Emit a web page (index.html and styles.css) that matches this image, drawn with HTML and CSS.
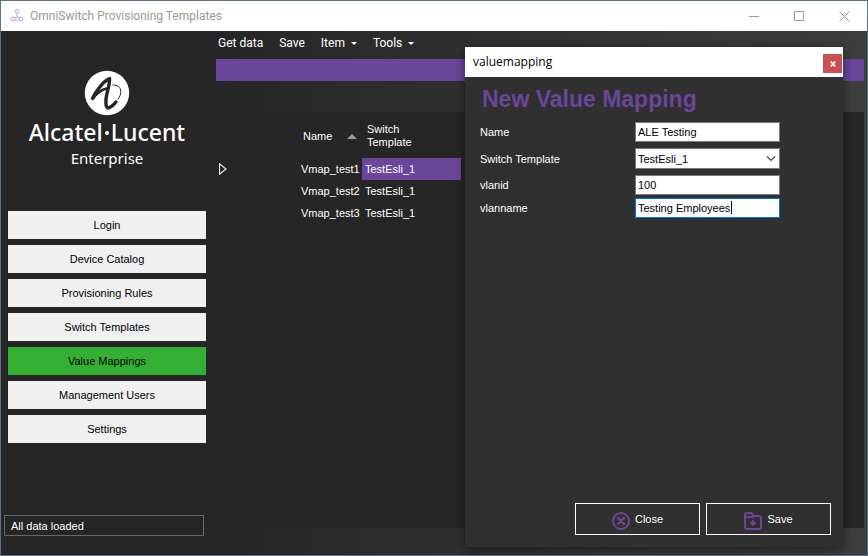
FILE: index.html
```html
<!DOCTYPE html>
<html lang="en">
<head>
<meta charset="utf-8">
<title>OmniSwitch Provisioning Templates</title>
<link rel="stylesheet" href="styles.css">
</head>
<body>
<div class="window">
  <header class="titlebar">
    <svg class="app-icon" width="14" height="14" viewBox="0 0 14 14" fill="none" stroke="#b9a5d6" aria-hidden="true">
      <circle cx="7" cy="2.500" r="1.800"/><circle cx="3" cy="10" r="1.800"/><circle cx="11" cy="10" r="1.800"/>
      <path d="M7 4.500v3.500M7 8l-2.500 1M7 8l2.500 1M5 11h4"/>
    </svg>
    <h1 class="app-title">OmniSwitch Provisioning Templates</h1>
    <div class="window-controls">
      <button class="control" type="button" aria-label="Minimize"><svg width="11" height="11" viewBox="0 0 11 11"><path d="M0 5.500h10"/></svg></button>
      <button class="control" type="button" aria-label="Maximize"><svg width="11" height="11" viewBox="0 0 11 11"><path d="M.5.500h9v9h-9z"/></svg></button>
      <button class="control" type="button" aria-label="Close window"><svg width="11" height="11" viewBox="0 0 11 11"><path d="M.5.500l10 10M10.500.500l-10 10"/></svg></button>
    </div>
  </header>
  <div class="body">
    <aside class="sidebar">
      <div class="logo">
        <svg width="46" height="46" viewBox="0 0 46 46" fill="none" stroke-linecap="round" stroke-linejoin="round" aria-hidden="true">
          <circle cx="23" cy="23" r="22.200" fill="#fff"/>
          <path d="M8.500 28.500C12 21 19 11.500 25.500 8.500C26 15 22.500 23 22 29C21.500 36 22.500 39 25.500 37.500C28 36.300 30.500 34 32 32" stroke="#262626" stroke-width="3.400"/>
          <path d="M9 28.500C12 24.500 16 20 22.500 18.500" stroke="#262626" stroke-width="2.400"/>
          <path d="M29 15C33 14.500 37 17.500 36.800 21.500C36.700 25 35.500 27 34 29" stroke="#262626"/>
        </svg>
        <div class="brand">Alcatel<span class="brand-dot"></span>Lucent</div>
        <div class="brand-sub">Enterprise</div>
      </div>
      <nav class="nav">
        <button class="nav-item" type="button">Login</button>
        <button class="nav-item" type="button">Device Catalog</button>
        <button class="nav-item" type="button">Provisioning Rules</button>
        <button class="nav-item" type="button">Switch Templates</button>
        <button class="nav-item active" type="button" aria-current="page">Value Mappings</button>
        <button class="nav-item" type="button">Management Users</button>
        <button class="nav-item" type="button">Settings</button>
      </nav>
      <div class="status" role="status">All data loaded</div>
    </aside>
    <main class="main">
      <div class="menu">
        <button class="menu-item" type="button">Get data</button>
        <button class="menu-item" type="button">Save</button>
        <button class="menu-item" type="button">Item<span class="arrow"></span></button>
        <button class="menu-item" type="button">Tools<span class="arrow"></span></button>
      </div>
      <div class="band"></div>
      <div class="grid">
        <table class="mappings">
          <colgroup><col class="col-marker"><col class="col-name"><col class="col-template"></colgroup>
          <thead>
            <tr><th></th><th><div class="sorted">Name<span class="sort"></span></div></th><th>Switch<br>Template</th></tr>
          </thead>
          <tbody>
            <tr><td><svg class="marker" width="9" height="12" viewBox="0 0 9 12" fill="none" stroke="#e6e6e6" stroke-width="1.200" aria-hidden="true"><path d="M.5.800v10.400l6.500-5.200z"/></svg></td><td>Vmap_test1</td><td class="selected">TestEsli_1</td></tr>
            <tr><td></td><td>Vmap_test2</td><td>TestEsli_1</td></tr>
            <tr><td></td><td>Vmap_test3</td><td>TestEsli_1</td></tr>
          </tbody>
        </table>
      </div>
    </main>
  </div>
  <form class="dialog" role="dialog" aria-labelledby="dialog-name">
    <div class="dialog-bar">
      <span id="dialog-name">valuemapping</span>
      <button class="dialog-close" type="button" aria-label="Close dialog"><svg width="6" height="6" viewBox="0 0 6 6" fill="none" stroke="#fff" stroke-width="1.600"><path d="M.8.500l4.400 5M5.200.500l-4.400 5"/></svg></button>
    </div>
    <div class="dialog-content">
      <h2 class="dialog-title">New Value Mapping</h2>
      <div class="field"><label for="name">Name</label><input id="name" class="box" type="text" value="ALE Testing"></div>
      <div class="field">
        <label for="template">Switch Template</label>
        <div class="box-wrap">
          <select id="template" class="box"><option>TestEsli_1</option></select>
          <svg class="chevron" width="10" height="6" viewBox="0 0 10 6" fill="none" stroke="#444" stroke-width="1.200" aria-hidden="true"><path d="M1 .5l4 4 4-4"/></svg>
        </div>
      </div>
      <div class="field"><label for="vlanid">vlanid</label><input id="vlanid" class="box" type="text" value="100"></div>
      <div class="field near"><label for="vlanname">vlanname</label><div class="box-wrap"><input id="vlanname" class="box focused" type="text" value="Testing Employees"><span class="caret"></span></div></div>
      <div class="actions">
        <button class="action" type="button">
          <svg width="18" height="18" viewBox="0 0 18 18" fill="none" stroke="#6b469b" stroke-width="2" stroke-linecap="round" aria-hidden="true"><circle cx="9" cy="9" r="8"/><path d="M6 6l6 6M12 6l-6 6" stroke-width="2.400"/></svg>
          Close
        </button>
        <button class="action" type="button">
          <svg width="18" height="18" viewBox="0 0 18 18" fill="none" stroke="#6b469b" stroke-width="2" stroke-linecap="round" stroke-linejoin="round" aria-hidden="true"><path d="M1 15V3a2 2 0 0 1 2-2h3.500a2 2 0 0 1 2 1.500L9.500 4H15a2 2 0 0 1 2 2v9a2 2 0 0 1-2 2H3a2 2 0 0 1-2-2zM1 5h8M9 8.500v4.500M7 11l2 2 2-2z"/></svg>
          Save
        </button>
      </div>
    </div>
  </form>
</div>
</body>
</html>
```

FILE: styles.css
```css
* { box-sizing: border-box; }

body {
  margin: 0;
  padding: 1px;
  height: 100vh;
  background: #5f7187;
  color: #fff;
  font: 11px/14px "Liberation Sans", Arial, sans-serif;
}

button, input, select { margin: 0; font: inherit; color: inherit; }
button { padding: 0; border: 0; background: none; }

.window {
  position: relative;
  display: flex;
  flex-direction: column;
  height: 100%;
  background: linear-gradient(90deg, #262626 25%, #3e3e3e);
}

.titlebar {
  display: flex;
  align-items: center;
  gap: 6px;
  height: 30px;
  padding-left: 9px;
  background: #fff;
}
.app-title {
  flex: 1;
  margin: 0;
  color: #999;
  font: 12px/16px Roboto, sans-serif;
}
.window-controls { display: flex; height: 100%; }
.control { display: grid; place-items: center; width: 45px; }
.control svg { fill: none; stroke: #999; }

.body { flex: 1; display: flex; min-height: 0; }

.sidebar {
  display: flex;
  flex-direction: column;
  width: 215px;
  padding: 39px 10px 19px 3px;
}
.logo {
  display: flex;
  flex-direction: column;
  align-items: center;
  padding-left: 4px;
  font-family: "Noto Sans", sans-serif;
}
.brand {
  display: flex;
  align-items: center;
  font-size: 23px;
  line-height: 32px;
  font-weight: 500;
}
.brand-dot { width: 4px; height: 4px; margin: 2px 2px 0; border-radius: 50%; background: #fff; }
.brand-sub { font-size: 15px; line-height: 20px; }

.nav {
  display: flex;
  flex-direction: column;
  gap: 6px;
  margin-top: 43px;
  padding: 0 0 0 4px;
}
.nav-item { height: 28px; background: #f0f0f0; color: #000; }
.nav-item.active { background: #33b033; }

.status {
  margin: auto 2px 0 0;
  padding: 3px 6px;
  height: 21px;
  border: 1px solid #696969;
}

.main { flex: 1; display: flex; flex-direction: column; padding: 0 3px 27px 0; }
.menu {
  display: flex;
  gap: 16px;
  height: 28px;
  padding: 0 0 4px 2px;
  font: 12px/16px Roboto, sans-serif;
}
.menu-item { display: flex; align-items: center; gap: 6px; }
.arrow { border: 3px solid transparent; border-top-color: #fff; border-bottom: 0; }
.band { height: 22px; background: #6b469b; }
.grid { flex: 1; margin-top: 31px; background: #262626; }

.mappings { table-layout: fixed; width: 245px; border-collapse: collapse; }
.col-marker { width: 82px; }
.col-name { width: 64px; }
.mappings th { height: 46px; padding: 2px 5px 0; font-weight: 400; text-align: left; line-height: 13px; }
.mappings td { height: 22px; padding: 0 3px; white-space: nowrap; }
.sorted { display: flex; align-items: center; justify-content: space-between; }
.sort { border: 5px solid transparent; border-top: 0; border-bottom-color: #999; }
.marker { display: block; }
.selected { background: #6b469b; }

.dialog {
  position: absolute;
  top: 46px;
  right: 24px;
  bottom: 8px;
  width: 378px;
  display: flex;
  flex-direction: column;
  background: #303030;
  box-shadow: 0 2px 10px rgba(0, 0, 0, .5);
}
.dialog-bar {
  display: flex;
  align-items: center;
  justify-content: space-between;
  height: 30px;
  padding: 0 1px 0 8px;
  background: #fff;
  color: #000;
  font: 12px/16px "Open Sans", sans-serif;
}
.dialog-close { display: grid; place-items: center; width: 19px; height: 19px; margin-top: 3px; background: #c75050; }
.dialog-content { flex: 1; display: flex; flex-direction: column; padding: 9px 12px 12px 15px; }
.dialog-title { margin: 0 0 9px 2px; color: #6b469b; font-size: 23px; line-height: 27px; }
.field { display: grid; grid-template-columns: 155px 145px; align-items: center; margin-bottom: 6px; }
.field.near { margin-top: -3px; }
.box {
  display: block;
  width: 100%;
  height: 20px;
  padding: 0 2px;
  border: 1px solid #7a7a7a;
  border-radius: 0;
  outline: 0;
  background: #fff;
  color: #000;
}
select.box { height: 21px; appearance: none; }
.box.focused { border-color: #0078d7; }
.box-wrap { position: relative; }
.chevron { position: absolute; right: 4px; top: 8px; }
.caret { position: absolute; left: 96px; top: 3px; width: 1px; height: 13px; background: #000; }
.actions { display: flex; justify-content: flex-end; gap: 6px; margin-top: auto; }
.action {
  display: flex;
  align-items: center;
  justify-content: center;
  gap: 5px;
  width: 125px;
  height: 32px;
  border: 1px solid #fff;
}
.action svg { margin-top: 3px; }
```
